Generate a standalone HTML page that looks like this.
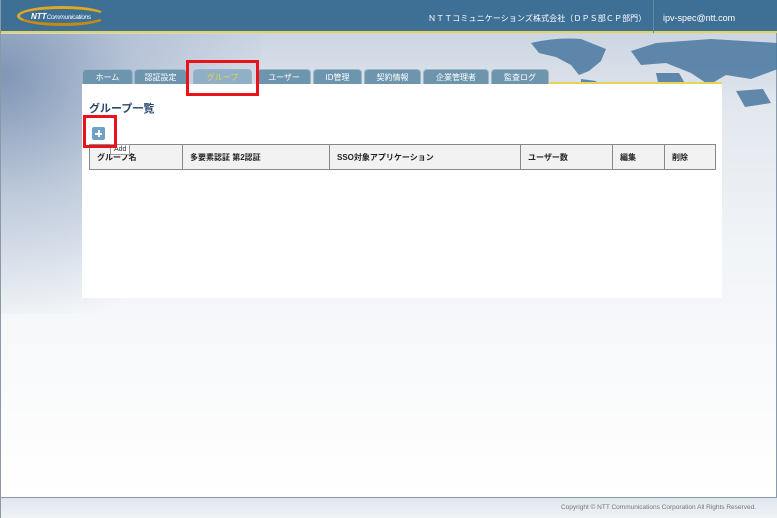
<!DOCTYPE html>
<html><head><meta charset="utf-8"><style>
*{margin:0;padding:0;box-sizing:border-box}
body{width:777px;height:518px;overflow:hidden;position:relative;font-family:"Liberation Sans","Noto Sans CJK JP",sans-serif;background:linear-gradient(180deg,#ccd5e2 34px,#e3e8ef 110px,#f2f5f8 260px,#fafbfc 400px,#fff 495px);border-left:1px solid #8a98a8;border-right:1px solid #8a98a8}
.lside{position:absolute;left:0;top:34px;width:260px;height:280px;background:radial-gradient(ellipse at 0% 15%,#7f96b6 0%,rgba(170,185,208,.7) 35%,rgba(220,228,238,0) 75%)}
.hdr{position:absolute;left:0;top:0;width:777px;height:33px;background:#3e7096;border-bottom:2px solid #e8d35a}
.logo{position:absolute;left:16px;top:6px;width:90px;height:20px;border:3px solid #e0a820;border-radius:50%;border-right-color:transparent;border-bottom-color:#c88a10}
.logotxt{position:absolute;left:30px;top:12px;color:#fff;font-size:8px;font-weight:bold;font-style:italic}
.logotxt span{font-weight:normal;font-size:6.5px;letter-spacing:-.3px}
.co{position:absolute;left:427px;top:13px;color:#fff;font-size:8px;letter-spacing:.1px;white-space:nowrap}
.sep{position:absolute;left:652px;top:0;width:1px;height:33px;background:#5f8aa8}
.mail{position:absolute;left:662px;top:13px;color:#fff;font-size:9px}
.map{position:absolute;left:530px;top:35px;width:247px;height:75px;opacity:.85}
.tab{position:absolute;top:69px;height:15px;background:#6d95ae;color:#fff;font-size:8px;text-align:center;line-height:15px;border-radius:4px 4px 0 0;border:1px solid #9cb6c8;border-bottom:none}
.tab.sel{background:#8fb0c6;color:#f2d04a}
.yl{position:absolute;left:548px;top:82px;width:173px;height:2px;background:#e8d35a}
.panel{position:absolute;left:81px;top:84px;width:640px;height:214px;background:#fff}
h1{position:absolute;left:88px;top:100px;font-size:11px;color:#2a4a6a;font-weight:bold}
.add{position:absolute;left:91px;top:127px;width:13px;height:13px;background:#6fa0c8;border-radius:2px}
.add:before{content:"";position:absolute;left:3px;top:6px;width:7px;height:1.5px;background:#fff}
.add:after{content:"";position:absolute;left:6px;top:3px;width:1.5px;height:7px;background:#fff}
.red{position:absolute;border:3px solid #e8141a}
table{position:absolute;left:88px;top:144px;border-collapse:collapse;font-size:8px;font-weight:bold;color:#222}
td{border:1px solid #888;background:#f2f2f2;height:25px;padding-left:7px}
.tip{position:absolute;left:109px;top:144px;background:#fff;border:1px solid #999;font-size:7px;padding:1px 3px;color:#333}
.ft{position:absolute;left:0;top:497px;width:777px;height:21px;background:linear-gradient(#dfe6ee,#f0f3f6);border-top:1px solid #8a9aaa}
.ft span{position:absolute;right:22px;top:6px;font-size:6.5px;color:#777}
</style></head><body>
<div class="lside"></div>
<svg class="map" viewBox="0 0 247 75"><g fill="#4a78a0"><path d="M0 8 Q25 2 50 4 L75 14 L70 26 L58 36 L48 40 L40 30 L25 22 L8 18 Z"/><path d="M50 44 L65 46 L72 58 L62 75 L55 72 L50 58 Z"/><path d="M100 16 L125 8 L180 4 L247 8 L247 34 L220 44 L195 40 L178 50 L160 38 L135 28 L110 30 Z"/><path d="M125 38 L148 38 L156 52 L148 70 L136 66 L128 52 Z"/><path d="M205 56 L232 54 L240 68 L214 72 Z"/></g></svg>
<div class="hdr"><div class="logo"></div><div class="logotxt">NTT<span>Communications</span></div>
<div class="co">ＮＴＴコミュニケーションズ株式会社（ＤＰＳ部ＣＰ部門）</div><div class="sep"></div><div class="mail">ipv-spec@ntt.com</div></div>
<div class="tab" style="left:81px;width:51px">ホーム</div>
<div class="tab" style="left:133px;width:53px">認証設定</div>
<div class="tab sel" style="left:192px;width:59px">グループ</div>
<div class="tab" style="left:256px;width:54px">ユーザー</div>
<div class="tab" style="left:312px;width:49px">ID管理</div>
<div class="tab" style="left:363px;width:57px">契約情報</div>
<div class="tab" style="left:422px;width:66px">企業管理者</div>
<div class="tab" style="left:490px;width:58px">監査ログ</div>
<div class="yl"></div>
<div class="panel"></div>
<h1>グループ一覧</h1>
<div class="add"></div>
<table><tr><td style="width:93px">グループ名</td><td style="width:147px">多要素認証 第2認証</td><td style="width:191px">SSO対象アプリケーション</td><td style="width:92px">ユーザー数</td><td style="width:52px">編集</td><td style="width:51px">削除</td></tr></table>
<div class="tip">Add</div>
<div class="red" style="left:185px;top:60px;width:73px;height:36px"></div>
<div class="red" style="left:82px;top:115px;width:34px;height:33px"></div>
<div class="ft"><span>Copyright © NTT Communications Corporation All Rights Reserved.</span></div>
</body></html>
